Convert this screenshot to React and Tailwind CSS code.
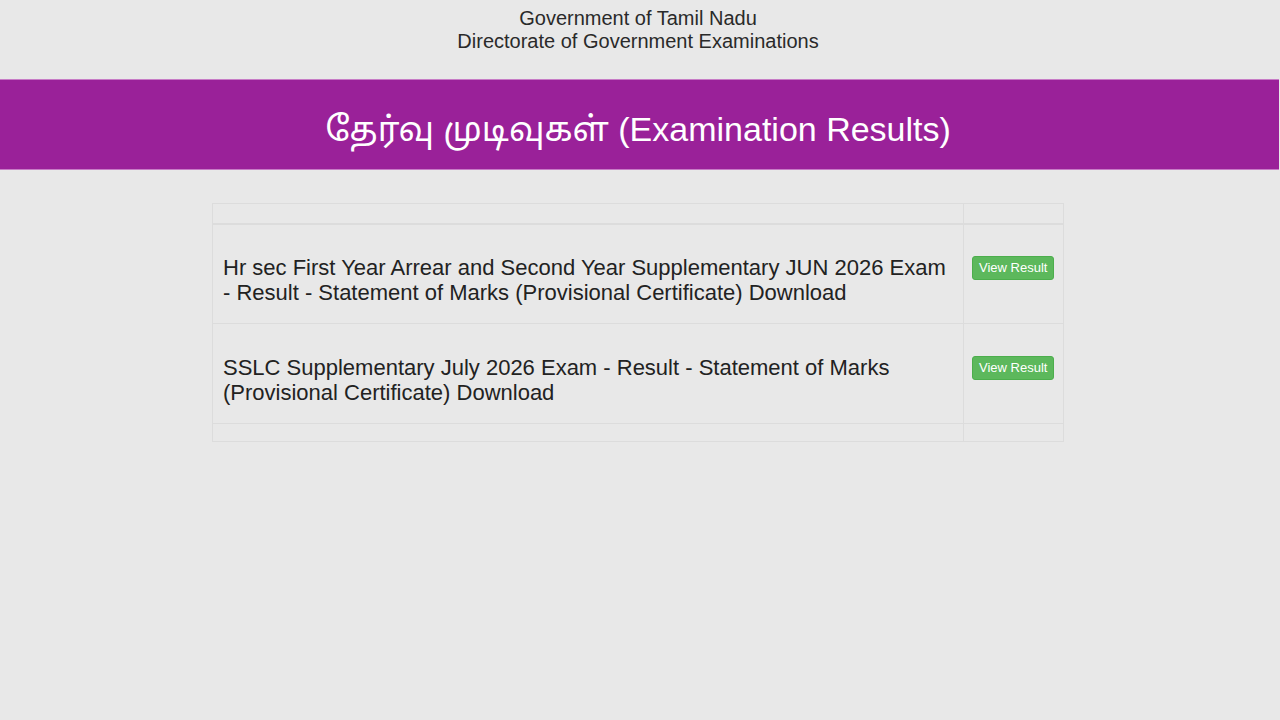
import React from 'react';

const rows = [
  'Hr sec First Year Arrear and Second Year Supplementary JUN 2026 Exam - Result - Statement of Marks (Provisional Certificate) Download',
  'SSLC Supplementary July 2026 Exam - Result - Statement of Marks (Provisional Certificate) Download',
];

export default function App() {
  return (
    <div className="min-h-screen bg-[#e8e8e8] text-[#222] font-['Liberation_Sans',Arial,'Noto_Sans_Tamil',sans-serif]">
      {/* Header */}
      <div className="h-[79px] pt-[7px] pr-[4px] text-center text-[20px] leading-[23px] text-[#2a2a2a]">
        <div>Government of Tamil Nadu</div>
        <div>Directorate of Government Examinations</div>
      </div>

      {/* Banner */}
      <div className="mr-px h-[91px] bg-[#9a2199] flex items-center justify-center pt-[10px] pr-[3px] border-y border-[#c77cc6]">
        <h1 className="text-[34px] text-white">தேர்வு முடிவுகள் (Examination Results)</h1>
      </div>

      {/* Results table */}
      <div className="pr-[4px]">
        <div className="mt-[33px] mx-auto w-[852px]">
          <table className="w-full border-collapse border border-[#dcdcdc]">
            <thead>
              <tr className="h-[20px] border-b-2 border-[#dcdcdc]">
                <th className="border-r border-[#dcdcdc]"></th>
                <th className="w-[100px]"></th>
              </tr>
            </thead>
            <tbody>
              {rows.map((r) => (
                <tr key={r} className="h-[100px] border-b border-[#dcdcdc]">
                  <td className="border-r border-[#dcdcdc] px-[10px] pt-[12px] text-[22px] leading-[25px] text-[#222] align-middle">
                    {r}
                  </td>
                  <td className="px-[8px] pb-[12px] align-middle">
                    <button className="bg-[#5cb85c] border border-[#4cae4c] text-white text-[13px] leading-[16px] px-[6px] py-[3px] rounded-[3px]">
                      View Result
                    </button>
                  </td>
                </tr>
              ))}
              <tr className="h-[18px]">
                <td className="border-r border-[#dcdcdc]"></td>
                <td></td>
              </tr>
            </tbody>
          </table>
        </div>
      </div>
    </div>
  );
}
